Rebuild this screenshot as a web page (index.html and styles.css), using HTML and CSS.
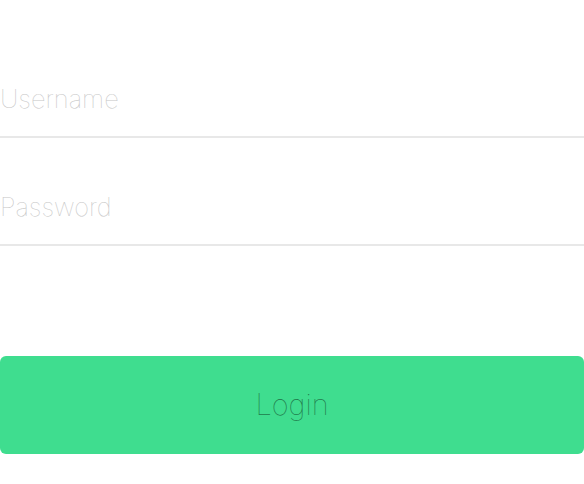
FILE: index.html
```html
<!DOCTYPE html>
<html><head><meta charset="utf-8"><link rel="stylesheet" href="styles.css"></head>
<body>
<form class="login">
  <input class="field" type="text" placeholder="Username">
  <input class="field" type="password" placeholder="Password">
  <button class="btn" type="button">Login</button>
</form>
</body></html>
```
FILE: styles.css
```css
html,body{margin:0;padding:0;background:#fff;}
.login{display:flex;flex-direction:column;padding-top:61px;}
.field{
  display:block;width:100%;box-sizing:border-box;height:77px;
  margin:0 0 31px 0;padding:0;border:0;border-bottom:2px solid #e8e8e8;
  font-family:Inter,sans-serif;font-weight:100;font-size:25.5px;
  color:#333;background:transparent;outline:none;
}
.field::placeholder{color:#c6c6c6;opacity:1;}
.btn{
  margin-top:79px;height:98px;width:100%;border:0;border-radius:6px;
  background:#3fdd8f;color:#1f7a4c;
  font-family:Inter,sans-serif;font-weight:100;font-size:29px;
  padding:0 0 2px 0;
}
```
